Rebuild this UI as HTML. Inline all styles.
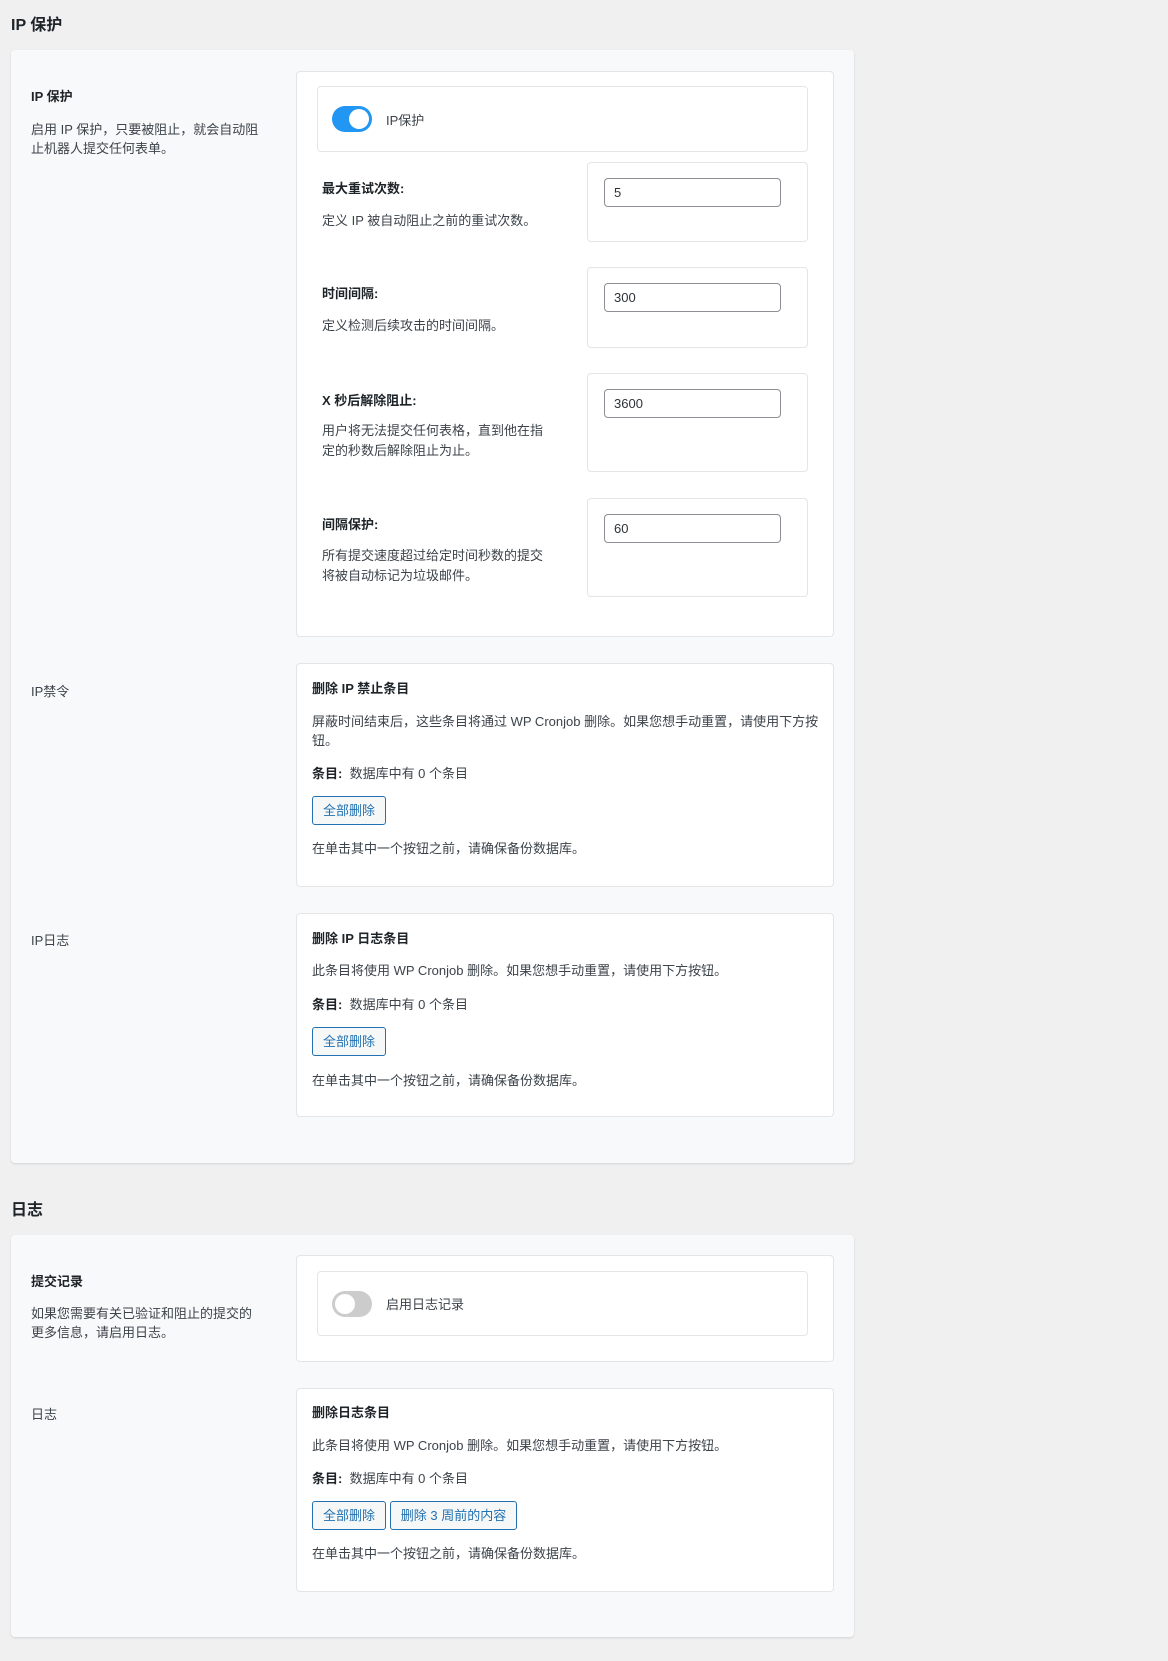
<!DOCTYPE html>
<html><head><meta charset="utf-8">
<style>
*{box-sizing:border-box;margin:0;padding:0}
body{width:1168px;height:1661px;background:#f0f0f1;font-family:"Liberation Sans","Noto Sans CJK SC",sans-serif;font-size:13px;color:#3c434a;position:relative;overflow:hidden}
.a{position:absolute}
.t{position:absolute;line-height:20px;white-space:nowrap}
.b{font-weight:bold;color:#1d2327}
.h{position:absolute;font-size:16px;font-weight:bold;color:#1d2327;line-height:24px}
.card{position:absolute;left:11px;width:843px;background:#f8f9fa;border-radius:4px;box-shadow:0 1px 2px rgba(0,0,0,.12)}
.box{position:absolute;background:#fff;border:1px solid #e4e5e7;border-radius:4px}
.inp{position:absolute;left:604px;width:177px;height:29px;border:1px solid #8c8f94;border-radius:4px;background:#fff;padding-left:9px;line-height:27px;font-size:13px;color:#2c3338}
.btn{position:absolute;height:29px;border:1px solid #2271b1;border-radius:3px;background:#f6f7f7;color:#2271b1;line-height:27px;text-align:center;font-size:13px}
.tg{position:absolute;width:40px;height:26px;border-radius:13px}
.tg i{position:absolute;top:3px;width:20px;height:20px;border-radius:50%;background:#fff}
</style></head><body>
<div class="h" style="left:11px;top:14px">IP 保护</div>
<div class="card" style="top:50px;height:1113px"></div>

<div class="t b" style="left:31px;top:87px">IP 保护</div>
<div class="t" style="left:31px;top:120px">启用 IP 保护，只要被阻止，就会自动阻</div>
<div class="t" style="left:31px;top:139px">止机器人提交任何表单。</div>

<div class="box" style="left:296px;top:71px;width:538px;height:566px"></div>
<div class="box" style="left:317px;top:86px;width:491px;height:66px"></div>
<div class="tg" style="left:332px;top:106px;background:#2196f3"><i style="left:17px"></i></div>
<div class="t" style="left:386px;top:111px">IP保护</div>

<div class="box" style="left:587px;top:162px;width:221px;height:80px"></div>
<div class="inp" style="top:178px">5</div>
<div class="t b" style="left:322px;top:179px">最大重试次数:</div>
<div class="t" style="left:322px;top:211px">定义 IP 被自动阻止之前的重试次数。</div>

<div class="box" style="left:587px;top:267px;width:221px;height:81px"></div>
<div class="inp" style="top:283px">300</div>
<div class="t b" style="left:322px;top:284px">时间间隔:</div>
<div class="t" style="left:322px;top:316px">定义检测后续攻击的时间间隔。</div>

<div class="box" style="left:587px;top:373px;width:221px;height:99px"></div>
<div class="inp" style="top:389px">3600</div>
<div class="t b" style="left:322px;top:391px">X 秒后解除阻止:</div>
<div class="t" style="left:322px;top:421px">用户将无法提交任何表格，直到他在指</div>
<div class="t" style="left:322px;top:441px">定的秒数后解除阻止为止。</div>

<div class="box" style="left:587px;top:498px;width:221px;height:99px"></div>
<div class="inp" style="top:514px">60</div>
<div class="t b" style="left:322px;top:515px">间隔保护:</div>
<div class="t" style="left:322px;top:546px">所有提交速度超过给定时间秒数的提交</div>
<div class="t" style="left:322px;top:566px">将被自动标记为垃圾邮件。</div>

<div class="t" style="left:31px;top:682px">IP禁令</div>
<div class="box" style="left:296px;top:663px;width:538px;height:224px"></div>
<div class="t b" style="left:312px;top:679px">删除 IP 禁止条目</div>
<div class="t" style="left:312px;top:712px">屏蔽时间结束后，这些条目将通过 WP Cronjob 删除。如果您想手动重置，请使用下方按</div>
<div class="t" style="left:312px;top:731px">钮。</div>
<div class="t" style="left:312px;top:764px"><span class="b">条目:</span>&nbsp; 数据库中有 0 个条目</div>
<div class="btn" style="left:312px;top:796px;width:74px">全部删除</div>
<div class="t" style="left:312px;top:839px">在单击其中一个按钮之前，请确保备份数据库。</div>

<div class="t" style="left:31px;top:931px">IP日志</div>
<div class="box" style="left:296px;top:913px;width:538px;height:204px"></div>
<div class="t b" style="left:312px;top:929px">删除 IP 日志条目</div>
<div class="t" style="left:312px;top:961px">此条目将使用 WP Cronjob 删除。如果您想手动重置，请使用下方按钮。</div>
<div class="t" style="left:312px;top:995px"><span class="b">条目:</span>&nbsp; 数据库中有 0 个条目</div>
<div class="btn" style="left:312px;top:1027px;width:74px">全部删除</div>
<div class="t" style="left:312px;top:1071px">在单击其中一个按钮之前，请确保备份数据库。</div>

<div class="h" style="left:11px;top:1199px">日志</div>
<div class="card" style="top:1235px;height:402px"></div>

<div class="t b" style="left:31px;top:1272px">提交记录</div>
<div class="t" style="left:31px;top:1304px">如果您需要有关已验证和阻止的提交的</div>
<div class="t" style="left:31px;top:1323px">更多信息，请启用日志。</div>
<div class="box" style="left:296px;top:1255px;width:538px;height:107px"></div>
<div class="box" style="left:317px;top:1271px;width:491px;height:65px"></div>
<div class="tg" style="left:332px;top:1291px;background:#ccc"><i style="left:3px"></i></div>
<div class="t" style="left:386px;top:1295px">启用日志记录</div>

<div class="t" style="left:31px;top:1405px">日志</div>
<div class="box" style="left:296px;top:1388px;width:538px;height:204px"></div>
<div class="t b" style="left:312px;top:1403px">删除日志条目</div>
<div class="t" style="left:312px;top:1436px">此条目将使用 WP Cronjob 删除。如果您想手动重置，请使用下方按钮。</div>
<div class="t" style="left:312px;top:1469px"><span class="b">条目:</span>&nbsp; 数据库中有 0 个条目</div>
<div class="btn" style="left:312px;top:1501px;width:74px">全部删除</div>
<div class="btn" style="left:390px;top:1501px;width:127px">删除 3 周前的内容</div>
<div class="t" style="left:312px;top:1544px">在单击其中一个按钮之前，请确保备份数据库。</div>
</body></html>
